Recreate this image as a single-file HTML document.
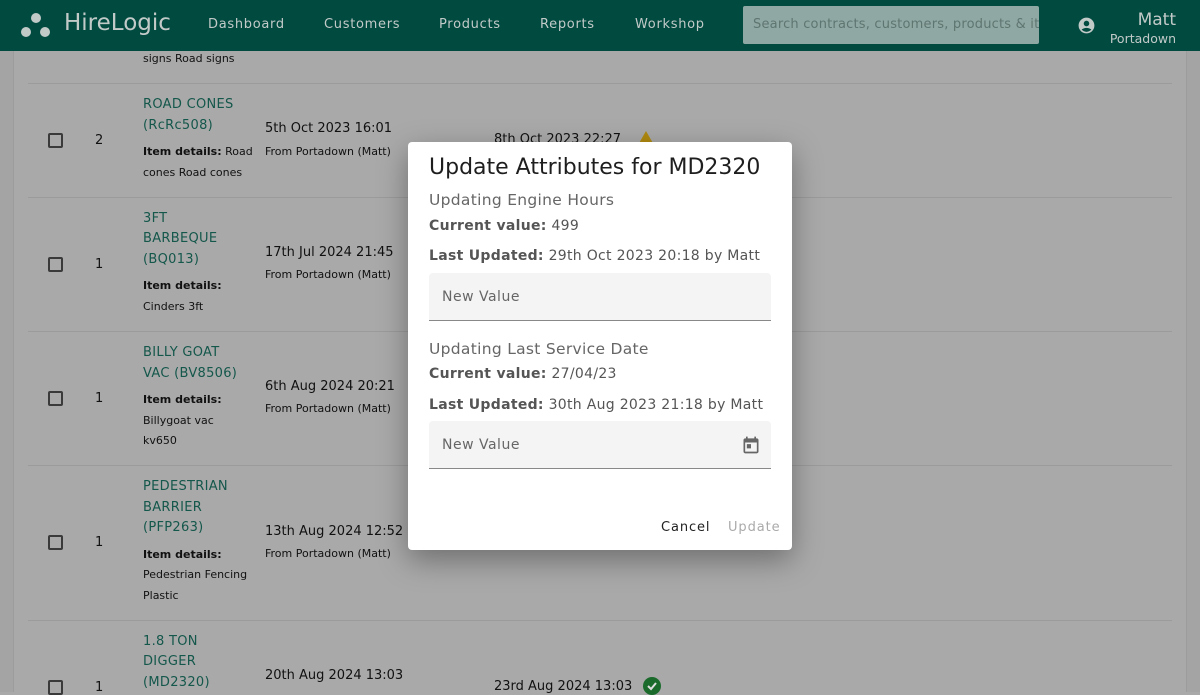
<!DOCTYPE html>
<html><head><meta charset="utf-8"><style>
*{margin:0;padding:0;box-sizing:border-box}
body{width:1200px;height:692px;overflow:hidden;background:#a9a9a9;font-family:"DejaVu Sans","Liberation Sans",sans-serif;position:relative;color:#111}
.hdr{position:absolute;left:0;top:0;width:1200px;height:51px;background:#004a40;color:#bcc8c5}
.logo{position:absolute;left:64px;top:10px;font-size:23px;color:#c2cac8}
.nav{position:absolute;top:17px;font-size:13px;letter-spacing:.7px;color:#c2cac8}
.search{position:absolute;left:743px;top:6px;width:296px;height:38px;background:#8fa8a3;border-radius:2px;font-size:13px;color:#5f7570;padding:11px 10px;white-space:nowrap;overflow:hidden;letter-spacing:.2px}
.side{position:absolute;left:0;top:51px;width:14px;height:641px;background:#a4a4a4;border-right:1px solid #9c9c9c}
.sider{position:absolute;left:1186px;top:51px;width:14px;height:641px;background:#a4a4a4;border-left:1px solid #9c9c9c}
.line{position:absolute;left:28px;width:1144px;height:1px;background:#9b9b9b}
.t{position:absolute;font-size:13px;white-space:nowrap}
.s{font-size:11px}
.g{color:#14574b;font-size:13px;letter-spacing:.3px}
.cb{position:absolute;left:48px;width:15px;height:15px;border:2px solid #3a3a3a;border-radius:2px}
.dlg{position:absolute;left:408px;top:142px;width:384px;height:408px;background:#fff;border-radius:4px;box-shadow:0 10px 30px rgba(0,0,0,.35)}
.d{position:absolute;left:21px;white-space:nowrap;color:#555;font-size:14px;letter-spacing:.3px}
.d b{color:#555}
.fld{position:absolute;left:21px;width:342px;height:48px;background:#f4f4f4;border-bottom:1px solid #888;border-radius:4px 4px 0 0}
.fld span{position:absolute;left:13px;top:16px;font-size:14px;color:#666;letter-spacing:.5px}
</style></head><body>
<div class="hdr">
<svg style="position:absolute;left:20px;top:13px" width="32" height="26"><circle cx="16" cy="5" r="5" fill="#c2cac8"/><circle cx="6" cy="19" r="5" fill="#c2cac8"/><circle cx="25" cy="19" r="5" fill="#c2cac8"/></svg>
<div class="logo">HireLogic</div>
<div class="nav" style="left:208px">Dashboard</div>
<div class="nav" style="left:324px">Customers</div>
<div class="nav" style="left:439px">Products</div>
<div class="nav" style="left:540px">Reports</div>
<div class="nav" style="left:635px">Workshop</div>
<div class="search">Search contracts, customers, products &amp; items</div>
<svg style="position:absolute;left:1077px;top:16px" width="19" height="19" viewBox="0 0 24 24"><path fill="#c2cac8" d="M12 2C6.48 2 2 6.48 2 12s4.480 10 10 10 10-4.48 10-10S17.52 2 12 2zm0 4c1.93 0 3.5 1.57 3.5 3.5S13.93 13 12 13s-3.5-1.57-3.5-3.5S10.07 6 12 6zm0 14c-2.03 0-4.43-.82-6.140-2.88C7.55 15.8 9.68 15 12 15s4.45.8 6.14 2.12C16.43 19.18 14.03 20 12 20z"/></svg>
<div style="position:absolute;right:24px;top:10px;font-size:17px;color:#c2cac8">Matt</div>
<div style="position:absolute;right:24px;top:31px;font-size:12.5px;color:#c2cac8">Portadown</div>
</div>
<div class="side"></div><div class="sider"></div>
<div class="t s" style="left:143px;top:52px">signs Road signs</div>
<div class="line" style="top:83px"></div>
<div class="line" style="top:197px"></div>
<div class="line" style="top:331px"></div>
<div class="line" style="top:465px"></div>
<div class="line" style="top:620px"></div>

<div class="cb" style="top:133px"></div><div class="t" style="left:95px;top:133px">2</div>
<div class="t g" style="left:143px;top:97px">ROAD CONES</div>
<div class="t g" style="left:143px;top:118px">(RcRc508)</div>
<div class="t s" style="left:143px;top:145px"><b>Item details:</b> Road</div>
<div class="t s" style="left:143px;top:166px">cones Road cones</div>
<div class="t" style="left:265px;top:121px">5th Oct 2023 16:01</div>
<div class="t s" style="left:265px;top:145px">From Portadown (Matt)</div>
<div class="t" style="left:494px;top:132px">8th Oct 2023 22:27</div>
<svg style="position:absolute;left:638px;top:131px" width="16" height="14"><path d="M8 0L16 14H0z" fill="#b08a10"/></svg>

<div class="cb" style="top:257px"></div><div class="t" style="left:95px;top:257px">1</div>
<div class="t g" style="left:143px;top:211px">3FT</div>
<div class="t g" style="left:143px;top:231px">BARBEQUE</div>
<div class="t g" style="left:143px;top:252px">(BQ013)</div>
<div class="t s" style="left:143px;top:279px"><b>Item details:</b></div>
<div class="t s" style="left:143px;top:300px">Cinders 3ft</div>
<div class="t" style="left:265px;top:245px">17th Jul 2024 21:45</div>
<div class="t s" style="left:265px;top:268px">From Portadown (Matt)</div>

<div class="cb" style="top:391px"></div><div class="t" style="left:95px;top:391px">1</div>
<div class="t g" style="left:143px;top:345px">BILLY GOAT</div>
<div class="t g" style="left:143px;top:366px">VAC (BV8506)</div>
<div class="t s" style="left:143px;top:393px"><b>Item details:</b></div>
<div class="t s" style="left:143px;top:414px">Billygoat vac</div>
<div class="t s" style="left:143px;top:434px">kv650</div>
<div class="t" style="left:265px;top:379px">6th Aug 2024 20:21</div>
<div class="t s" style="left:265px;top:402px">From Portadown (Matt)</div>

<div class="cb" style="top:535px"></div><div class="t" style="left:95px;top:535px">1</div>
<div class="t g" style="left:143px;top:479px">PEDESTRIAN</div>
<div class="t g" style="left:143px;top:500px">BARRIER</div>
<div class="t g" style="left:143px;top:520px">(PFP263)</div>
<div class="t s" style="left:143px;top:548px"><b>Item details:</b></div>
<div class="t s" style="left:143px;top:568px">Pedestrian Fencing</div>
<div class="t s" style="left:143px;top:589px">Plastic</div>
<div class="t" style="left:265px;top:524px">13th Aug 2024 12:52</div>
<div class="t s" style="left:265px;top:547px">From Portadown (Matt)</div>

<div class="cb" style="top:680px"></div><div class="t" style="left:95px;top:680px">1</div>
<div class="t g" style="left:143px;top:634px">1.8 TON</div>
<div class="t g" style="left:143px;top:654px">DIGGER</div>
<div class="t g" style="left:143px;top:675px">(MD2320)</div>
<div class="t" style="left:265px;top:668px">20th Aug 2024 13:03</div>
<div class="t" style="left:494px;top:679px">23rd Aug 2024 13:03</div>
<svg style="position:absolute;left:643px;top:677px" width="18" height="18"><circle cx="9" cy="9" r="9" fill="#1a6a2c"/><path d="M5 9l3 3 5-6" stroke="#ddd" stroke-width="2" fill="none"/></svg>

<div class="dlg">
<div style="position:absolute;left:21px;top:13px;font-size:22px;color:#1e1e1e;white-space:nowrap">Update Attributes for MD2320</div>
<div class="d" style="top:49px;font-size:15.5px;color:#666">Updating Engine Hours</div>
<div class="d" style="top:76px"><b>Current value:</b> 499</div>
<div class="d" style="top:106px"><b>Last Updated:</b> 29th Oct 2023 20:18 by Matt</div>
<div class="fld" style="top:131px"><span>New Value</span></div>
<div class="d" style="top:198px;font-size:15.5px;color:#666">Updating Last Service Date</div>
<div class="d" style="top:224px"><b>Current value:</b> 27/04/23</div>
<div class="d" style="top:255px"><b>Last Updated:</b> 30th Aug 2023 21:18 by Matt</div>
<div class="fld" style="top:279px"><span>New Value</span>
<svg style="position:absolute;right:10px;top:14px" width="20" height="20" viewBox="0 0 24 24"><path fill="#666" d="M19 4h-1V2h-2v2H8V2H6v2H5c-1.1 0-2 .9-2 2v14c0 1.1.9 2 2 2h14c1.1 0 2-.9 2-2V6c0-1.1-.9-2-2-2zm0 16H5V9h14v11zM7 11h5v5H7z"/></svg></div>
<div style="position:absolute;left:253px;top:378px;font-size:13px;letter-spacing:.9px;color:#222">Cancel</div>
<div style="position:absolute;left:320px;top:378px;font-size:13px;letter-spacing:.9px;color:#aaa">Update</div>
</div>
</body></html>
